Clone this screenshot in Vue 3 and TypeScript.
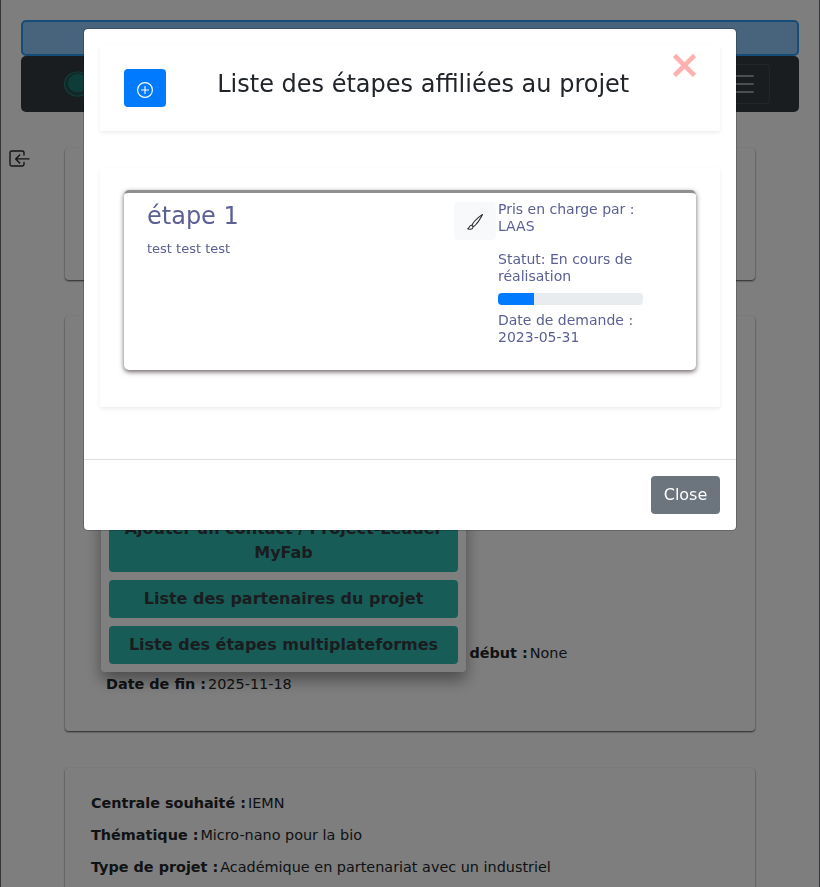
<script setup lang="ts">
import { ref } from 'vue'

interface Field {
  label: string
  value: string
}

const menuActions: string[] = [
  'Ajouter un contact / Project-Leader MyFab',
  'Liste des partenaires du projet',
  'Liste des étapes multiplateformes',
]

const projectFields: Field[] = [
  { label: 'Centrale souhaité :', value: 'IEMN' },
  { label: 'Thématique :', value: 'Micro-nano pour la bio' },
  { label: 'Type de projet :', value: 'Académique en partenariat avec un industriel' },
]

const step = {
  title: 'étape 1',
  description: 'test test test',
  platform: 'LAAS',
  status: 'En cours de réalisation',
  progress: 25,
  requested: '2023-05-31',
}

const open = ref(true)
</script>

<template>
  <div class="page">
    <div class="alert"></div>
    <nav class="navbar">
      <svg class="logo" width="40" height="28" viewBox="0 0 40 28">
        <ellipse cx="14.5" cy="14" rx="13" ry="12" fill="#2a4a4c" stroke="#1f7f78" stroke-width="1.2" />
        <ellipse cx="15" cy="13" rx="10.8" ry="9.8" fill="#1d7a72" stroke="#24524f" stroke-width="1.2" />
      </svg>
      <button class="toggler">
        <svg width="30" height="30" viewBox="0 0 30 30">
          <path d="M4 7h22M4 15h22M4 23h22" stroke="rgba(255,255,255,.5)" stroke-width="2" stroke-linecap="round" />
        </svg>
      </button>
    </nav>

    <svg class="exit" width="21" height="18" viewBox="0 0 21 18" fill="none" stroke="#23272b" stroke-width="1.4" stroke-linecap="round" stroke-linejoin="round">
      <path d="M15 5V2.7Q15 1 13.3 1H2.7Q1 1 1 2.7V14.3Q1 16 2.7 16H13.3Q15 16 15 14.3V12.5" />
      <path d="M20 8.9H6.7M10.7 4.9L6.7 8.9L10.7 12.9" />
    </svg>

    <main class="content">
      <section class="card card-summary"></section>
      <section class="card card-project">
        <p class="field start"><b>début :</b>None</p>
        <p class="field"><b>Date de fin :</b>2025-11-18</p>
        <div class="dropdown">
          <button v-for="action in menuActions" :key="action" class="action">{{ action }}</button>
        </div>
      </section>
      <section class="card card-details">
        <p v-for="f in projectFields" :key="f.label" class="field"><b>{{ f.label }}</b>{{ f.value }}</p>
      </section>
    </main>
  </div>

  <div v-if="open" class="backdrop">
    <div class="modal">
      <div class="modal-body">
        <header class="panel head">
          <button class="add">
            <svg width="16" height="16" viewBox="0 0 16 16" fill="none" stroke="#fff" stroke-width="1.15" stroke-linecap="round">
              <circle cx="8" cy="8" r="7.4" />
              <path d="M8 4.5v7M4.5 8h7" />
            </svg>
          </button>
          <h4 class="title">Liste des étapes affiliées au projet</h4>
          <button class="dismiss" @click="open = false">
            <svg width="24" height="24" viewBox="0 0 24 24">
              <path d="M2.5 2.5L22.5 22.5M22.5 2.5L2.5 22.5" stroke="#ffb0b0" stroke-width="4.6" />
            </svg>
          </button>
        </header>

        <section class="panel steps">
          <article class="step">
            <div class="step-text">
              <h4>{{ step.title }}</h4>
              <p>{{ step.description }}</p>
            </div>
            <button class="edit">
              <svg width="16" height="16" viewBox="0 0 16 16" fill="#212529">
                <path d="M15.825.12a.5.5 0 0 1 .132.584c-1.53 3.43-4.743 8.17-7.095 10.64a6.067 6.067 0 0 1-2.373 1.534c-.018.227-.06.538-.16.868-.201.659-.667 1.479-1.708 1.74a8.118 8.118 0 0 1-3.078.132 3.659 3.659 0 0 1-.562-.135 1.382 1.382 0 0 1-.466-.247.714.714 0 0 1-.204-.288.622.622 0 0 1 .004-.443c.095-.245.316-.38.461-.452.394-.197.625-.453.867-.826.095-.144.184-.297.287-.472l.117-.198c.151-.255.326-.54.546-.848.528-.739 1.201-.925 1.746-.896.126.007.243.025.348.048.062-.172.142-.38.238-.608.261-.619.658-1.419 1.187-2.069 2.176-2.67 6.18-6.206 9.117-8.104a.5.5 0 0 1 .596.04zM4.705 11.912a1.23 1.23 0 0 0-.419-.1c-.246-.013-.573.05-.879.479-.197.275-.355.532-.5.777l-.105.177c-.106.181-.213.362-.32.528a3.39 3.39 0 0 1-.76.861c.69.112 1.736.111 2.657-.12.559-.139.843-.569.993-1.06a3.122 3.122 0 0 0 .126-.75l-.793-.792zm1.44.026c.12-.04.277-.1.458-.183a5.068 5.068 0 0 0 1.535-1.1c1.9-1.996 4.412-5.57 6.052-8.631-2.59 1.927-5.566 4.66-7.302 6.792-.442.543-.795 1.243-1.042 1.826-.121.288-.214.54-.275.72v.001l.575.575zm-4.973 3.04.007-.005a.031.031 0 0 1-.007.004zm3.582-3.043.002.001h-.002z" />
              </svg>
            </button>
            <div class="step-meta">
              <p class="platform">Pris en charge par : {{ step.platform }}</p>
              <p class="status">Statut: {{ step.status }}</p>
              <div class="progress"><div class="bar" :style="{ width: step.progress + '%' }"></div></div>
              <p>Date de demande : {{ step.requested }}</p>
            </div>
          </article>
        </section>
      </div>
      <footer class="modal-footer">
        <button class="close" @click="open = false">Close</button>
      </footer>
    </div>
  </div>
</template>

<style>
body {
  background: #fdfdfd;
  overflow: hidden;
}
</style>

<style scoped>
.page,
.backdrop,
.page *,
.backdrop * {
  box-sizing: border-box;
}

.page,
.backdrop {
  font-family: 'DejaVu Sans', sans-serif;
  font-size: 16px;
  line-height: 1.5;
  color: #212529;
}

p,
h4 {
  margin: 0;
  font-weight: 400;
}

button {
  font: inherit;
  margin: 0;
  padding: 0;
  border: 0;
  border-radius: 4px;
  display: flex;
  align-items: center;
  justify-content: center;
}

.page {
  position: relative;
  height: 887px;
  overflow: hidden;
  padding: 20px 20px 0;
  background: #fdfdfd;
  border: solid #6b6b72;
  border-width: 0 1px;
}

.alert {
  height: 36px;
  background: #8ec8f8;
  border: 2px solid #2c98f0;
  border-radius: 5px;
}

.navbar {
  height: 56px;
  padding: 0 29px 0 42px;
  display: flex;
  align-items: center;
  justify-content: space-between;
  background: #343a40;
  border-radius: 5px;
}

.toggler {
  width: 56px;
  height: 40px;
  background: none;
  border: 1px solid rgba(255, 255, 255, 0.1);
}

.exit {
  position: absolute;
  left: 8px;
  top: 150px;
}

.content {
  padding: 36px 44px 0;
}

.card {
  position: relative;
  border-radius: 4px;
  margin-bottom: 36px;
  box-shadow: 0 1px 2px rgba(0, 0, 0, 0.7);
}

.card-summary {
  height: 132px;
}

.card-project {
  height: 415px;
  padding: 326px 41px 0;
  margin-bottom: 37px;
}

.card-details {
  height: 200px;
  padding: 19px 26px 0;
}

.field {
  font-size: 14.4px;
  line-height: 22px;
  height: 32px;
  white-space: nowrap;
}

.card-details .field {
  padding-top: 5px;
}

.field b {
  margin-right: 2px;
}

.start {
  height: 31px;
  padding-left: 363.5px;
}

.dropdown {
  position: absolute;
  left: 36px;
  bottom: 59px;
  width: 365px;
  padding: 8px;
  display: flex;
  flex-direction: column;
  gap: 8px;
  background: #fff;
  border-radius: 4px;
  box-shadow: 0 8px 16px rgba(0, 0, 0, 0.4);
}

.action {
  padding: 7px 12px;
  line-height: 24px;
  font-weight: 700;
  color: #343a40;
  background: #30b9ae;
}

.backdrop {
  position: fixed;
  inset: 0;
  padding-top: 28px;
  background: rgba(0, 0, 0, 0.5);
}

.modal {
  width: 654px;
  margin: 0 auto;
  background: #fff;
  background-clip: padding-box;
  border: 1px solid rgba(0, 0, 0, 0.2);
  border-radius: 5px;
}

.modal-body {
  padding: 16px 16px 52px;
}

.panel {
  border-radius: 2px;
  box-shadow: 0 2px 4px rgba(0, 0, 0, 0.075);
}

.head {
  height: 86px;
  padding: 24px 24px 0;
  display: flex;
  align-items: flex-start;
}

.add {
  width: 42px;
  height: 38px;
  padding-top: 4px;
  background: #007bff;
}

.title {
  margin: 1px 0 0 51.2px;
  font-size: 24px;
  line-height: 29px;
  white-space: nowrap;
}

.dismiss {
  margin: -16px 0 0 auto;
  background: none;
}

.steps {
  height: 239px;
  margin-top: 37px;
  padding: 22px 24px 0;
}

.step {
  height: 180px;
  padding: 9px 23px 0;
  display: flex;
  align-items: flex-start;
  color: #5a5f94;
  border-top: 3px solid #909090;
  border-radius: 5px;
  box-shadow: 0 2px 5px rgba(60, 45, 50, 0.75);
}

.step-text {
  width: 307px;
}

.step-text h4 {
  font-size: 24px;
  line-height: 29px;
}

.step-text p {
  margin-top: 8px;
  font-size: 13px;
  line-height: 19px;
}

.edit {
  width: 42px;
  height: 38px;
  padding-top: 2px;
  background: #f8f9fa;
}

.step-meta {
  width: 145px;
  margin-left: 2px;
  font-size: 14px;
  line-height: 17px;
}

.platform {
  margin: -1px 0 16px;
}

.progress {
  height: 12px;
  margin: 8px 0 7px;
  background: #e9ecef;
  border-radius: 4px;
  overflow: hidden;
}

.bar {
  height: 100%;
  background: #007bff;
}

.modal-footer {
  padding: 16px;
  display: flex;
  justify-content: flex-end;
  border-top: 1px solid #dee2e6;
}

.close {
  width: 69px;
  height: 38px;
  color: #fff;
  background: #6c757d;
}
</style>
